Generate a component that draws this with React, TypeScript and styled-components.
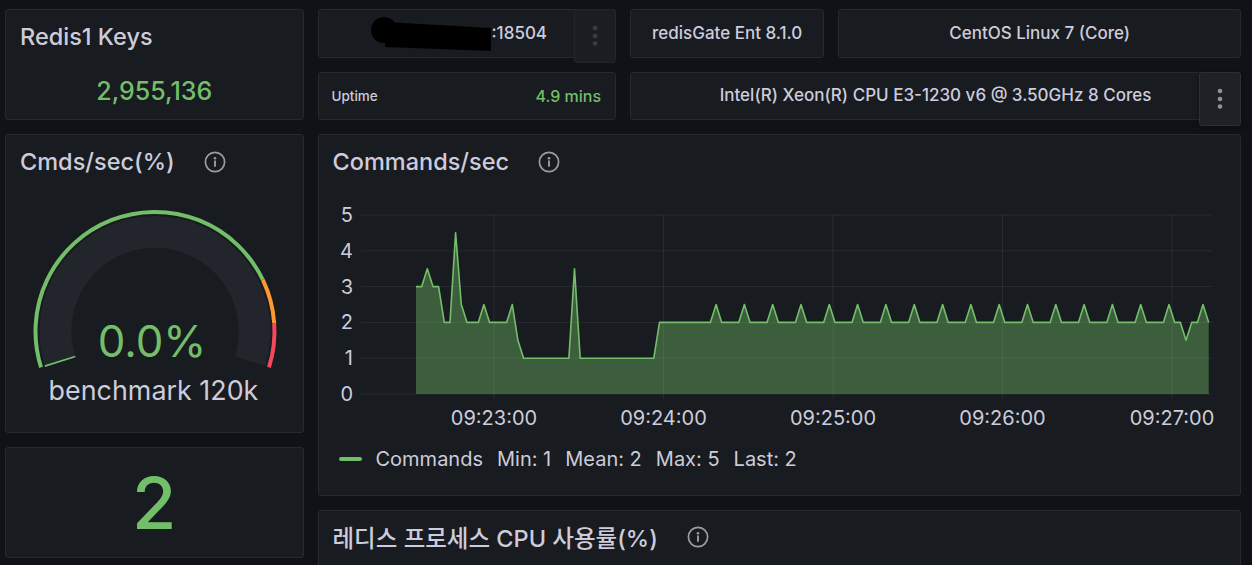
import React from 'react';
import styled, { createGlobalStyle } from 'styled-components';

const GlobalStyle = createGlobalStyle`
  html, body {
    margin: 0;
    padding: 0;
    background: #111217;
    overflow: hidden;
  }
  body {
    font-family: Inter, "Noto Sans CJK KR", "Liberation Sans", sans-serif;
    color: #ccccdc;
  }
`;

const GREEN = '#73bf69';

// ---- chart data (one point every 2s) ----
const buildSeries = () => {
  const v: number[] = [3, 3, 3.5, 3, 3, 2, 2, 4.5, 2.5, 2, 2, 2, 2.5, 2, 2, 2, 2, 2.5, 1.5];
  for (let i = 19; i <= 27; i++) v.push(1);
  v.push(3.5);
  for (let i = 29; i <= 42; i++) v.push(1);
  for (let i = 43; i <= 135; i++) v.push(i >= 53 && (i - 53) % 5 === 0 ? 2.5 : 2);
  v.push(1.5, 2, 2, 2.5, 2);
  return v;
};

const series = buildSeries();
const X0 = 415;
const STEP = 5.662;
const Y0 = 393;
const UNIT = 35.8;
const px = (i: number) => X0 + i * STEP;
const py = (val: number) => Y0 - val * UNIT;

const linePath = series.map((val, i) => `${i ? 'L' : 'M'}${px(i).toFixed(1)} ${py(val).toFixed(1)}`).join(' ');
const areaPath = `M${X0} ${Y0} ${linePath.replace(/^M/, 'L')} L${px(series.length - 1).toFixed(1)} ${Y0} Z`;

const timeTicks = ['09:23:00', '09:24:00', '09:25:00', '09:26:00', '09:27:00'];

// ---- gauge geometry ----
const CX = 155;
const CY = 331;
const START = 197.5;
const SWEEP = 215;
const pt = (r: number, a: number) => [CX + r * Math.cos((a * Math.PI) / 180), CY - r * Math.sin((a * Math.PI) / 180)];
const arc = (r: number, a0: number, a1: number) => {
  const [x0, y0] = pt(r, a0);
  const [x1, y1] = pt(r, a1);
  return `M ${x0} ${y0} A ${r} ${r} 0 ${a0 - a1 > 180 ? 1 : 0} 1 ${x1} ${y1}`;
};
const at = (pct: number) => START - SWEEP * pct;

const InfoIcon = () => (
  <InfoSvg viewBox="0 0 24 24" width="24" height="24">
    <circle cx="12" cy="12" r="9.6" fill="none" stroke="currentColor" strokeWidth="1.7" />
    <circle cx="12" cy="8.3" r="1.25" fill="currentColor" />
    <line x1="12" y1="11.3" x2="12" y2="16" stroke="currentColor" strokeWidth="1.9" strokeLinecap="round" />
  </InfoSvg>
);

const PanelMenu = ({ active }: { active?: boolean }) => (
  <MenuButton $active={active}>
    <svg width="6" height="22" viewBox="0 0 6 22">
      <circle cx="3" cy="3" r="2.3" fill="currentColor" />
      <circle cx="3" cy="11" r="2.3" fill="currentColor" />
      <circle cx="3" cy="18.5" r="2.3" fill="currentColor" />
    </svg>
  </MenuButton>
);

const Gauge = () => {
  const [lx0, ly0] = pt(84, START);
  const [lx1, ly1] = pt(116, START);
  return (
    <svg width="297" height="245" viewBox="6 187 297 245">
      <path d={arc(100, START, START - SWEEP)} fill="none" stroke="#22252b" strokeWidth="32" />
      <path d={arc(120, START, at(0.8))} fill="none" stroke={GREEN} strokeWidth="4" />
      <path d={arc(120, at(0.8), at(0.9))} fill="none" stroke="#ff9830" strokeWidth="4" />
      <path d={arc(120, at(0.9), START - SWEEP)} fill="none" stroke="#f2495c" strokeWidth="4" />
      <line x1={lx0} y1={ly0} x2={lx1} y2={ly1} stroke={GREEN} strokeWidth="1.6" />
      <text x="152" y="357" textAnchor="middle" fill={GREEN} fontSize="44" fontFamily="Inter">
        0.0%
      </text>
      <text x="153.5" y="400" textAnchor="middle" fill="#ccccdc" fontSize="27" fontFamily="Inter">
        benchmark 120k
      </text>
    </svg>
  );
};

const Chart = () => (
  <svg width="921" height="245" viewBox="318 187 921 245">
    {[0, 1, 2, 3, 4, 5].map((v) => (
      <g key={v}>
        <line x1="360" x2="1211" y1={py(v)} y2={py(v)} stroke="rgba(204,204,220,0.09)" strokeWidth="1" />
        <text x="352" y={py(v) + 7} textAnchor="end" fill="#ccccdc" fontSize="20" fontFamily="Inter">
          {v}
        </text>
      </g>
    ))}
    {timeTicks.map((t, k) => {
      const x = 493 + k * 169.5;
      return (
        <g key={t}>
          <line x1={x} x2={x} y1="214" y2="398" stroke="rgba(204,204,220,0.09)" strokeWidth="1" />
          <text x={x} y="424" textAnchor="middle" fill="#ccccdc" fontSize="20" fontFamily="Inter">
            {t}
          </text>
        </g>
      );
    })}
    <path d={areaPath} fill={GREEN} fillOpacity="0.41" />
    <path d={linePath} fill="none" stroke={GREEN} strokeWidth="1.6" strokeLinejoin="round" />
  </svg>
);

const Redaction = () => (
  <svg width="121" height="37" viewBox="0 0 121 37">
    <circle cx="14" cy="15" r="13" fill="#000" />
    <polygon points="15,7 121,13 121,36 15,32" fill="#000" />
  </svg>
);

export default function App() {
  return (
    <>
      <GlobalStyle />
      <Dashboard>
        <Panel $col="1 / span 6" $row="1 / span 2">
          <PanelHeader>
            <PanelTitle>Redis1 Keys</PanelTitle>
          </PanelHeader>
          <StatBody>
            <StatValue $size={25} $color={GREEN}>2,955,136</StatValue>
          </StatBody>
        </Panel>

        <Panel $col="7 / span 6" $row="1">
          <StatBody $padRight={16}>
            <Redaction />
            <StatValue $size={17}>:18504</StatValue>
          </StatBody>
          <PanelMenu />
        </Panel>

        <Panel $col="13 / span 4" $row="1">
          <StatBody>
            <StatValue $size={17}>redisGate Ent 8.1.0</StatValue>
          </StatBody>
        </Panel>

        <Panel $col="17 / span 8" $row="1">
          <StatBody>
            <StatValue $size={17}>CentOS Linux 7 (Core)</StatValue>
          </StatBody>
        </Panel>

        <Panel $col="7 / span 6" $row="2">
          <SplitBody>
            <StatLabel>Uptime</StatLabel>
            <StatValue $size={16} $color={GREEN}>4.9 mins</StatValue>
          </SplitBody>
        </Panel>

        <Panel $col="13 / span 12" $row="2">
          <StatBody>
            <StatValue $size={17}>Intel(R) Xeon(R) CPU E3-1230 v6 @ 3.50GHz 8 Cores</StatValue>
          </StatBody>
          <PanelMenu active />
        </Panel>

        <Panel $col="1 / span 6" $row="3 / span 5">
          <PanelHeader>
            <PanelTitle>Cmds/sec(%)</PanelTitle>
            <InfoIcon />
          </PanelHeader>
          <Gauge />
        </Panel>

        <Panel $col="7 / span 18" $row="3 / span 6">
          <PanelHeader>
            <PanelTitle>Commands/sec</PanelTitle>
            <InfoIcon />
          </PanelHeader>
          <Chart />
          <Legend>
            <LegendSwatch />
            <LegendItem>Commands</LegendItem>
            <LegendItem>Min: 1</LegendItem>
            <LegendItem>Mean: 2</LegendItem>
            <LegendItem>Max: 5</LegendItem>
            <LegendItem>Last: 2</LegendItem>
          </Legend>
        </Panel>

        <Panel $col="1 / span 6" $row="8 / span 2">
          <StatBody>
            <StatValue $size={72} $color={GREEN}>2</StatValue>
          </StatBody>
        </Panel>

        <Panel $col="7 / span 18" $row="9 / span 6">
          <PanelHeader>
            <PanelTitle>레디스 프로세스 CPU 사용률(%)</PanelTitle>
            <InfoIcon />
          </PanelHeader>
        </Panel>
      </Dashboard>
    </>
  );
}

const Dashboard = styled.main`
  display: grid;
  grid-template-columns: repeat(24, minmax(0, 1fr));
  grid-auto-rows: 48.6px;
  gap: 14px;
  padding: 9px 11px 0 5px;
  height: 565px;
  box-sizing: border-box;
  overflow: hidden;
`;

const Panel = styled.section<{ $col: string; $row: string }>`
  grid-column: ${(p) => p.$col};
  grid-row: ${(p) => p.$row};
  position: relative;
  display: flex;
  flex-direction: column;
  min-width: 0;
  background: #181b1f;
  border: 1px solid #26292e;
  border-radius: 3px;
`;

const PanelHeader = styled.header`
  display: flex;
  align-items: center;
  gap: 28px;
  height: 53px;
  padding: 0 14px;
  flex-shrink: 0;
`;

const PanelTitle = styled.h2`
  margin: 0;
  font-size: 23.5px;
  font-weight: 500;
  color: #ccccdc;
  white-space: nowrap;
`;

const InfoSvg = styled.svg`
  color: #9b9ca6;
  flex-shrink: 0;
`;

const StatBody = styled.div<{ $padRight?: number }>`
  flex: 1;
  display: flex;
  align-items: center;
  justify-content: center;
  padding-right: ${(p) => p.$padRight ?? 0}px;
`;

const SplitBody = styled.div`
  flex: 1;
  display: flex;
  align-items: center;
  justify-content: space-between;
  padding: 0 14px 0 13px;
`;

const StatValue = styled.span<{ $size: number; $color?: string }>`
  font-size: ${(p) => p.$size}px;
  font-weight: 500;
  line-height: 1;
  color: ${(p) => p.$color ?? '#ccccdc'};
  white-space: nowrap;
`;

const StatLabel = styled.span`
  font-size: 13.5px;
  font-weight: 500;
  color: #ccccdc;
`;

const MenuButton = styled.div<{ $active?: boolean }>`
  position: absolute;
  top: -1px;
  right: -1px;
  width: 42px;
  height: 54px;
  box-sizing: border-box;
  display: flex;
  align-items: center;
  justify-content: center;
  border-radius: 3px;
  background: ${(p) => (p.$active ? '#1f2126' : '#1a1d21')};
  border: 1px solid ${(p) => (p.$active ? '#2c2f35' : '#22252a')};
  box-shadow: ${(p) => (p.$active ? '0 2px 6px rgba(0,0,0,0.35)' : 'none')};
  color: ${(p) => (p.$active ? '#8f929a' : '#3a3d43')};
`;

const Legend = styled.div`
  display: flex;
  align-items: center;
  gap: 14px;
  height: 28px;
  margin-top: 12px;
  padding-left: 20px;
`;

const LegendSwatch = styled.span`
  width: 23px;
  height: 4.5px;
  border-radius: 3px;
  background: ${GREEN};
`;

const LegendItem = styled.span`
  font-size: 20px;
  color: #ccccdc;
  white-space: nowrap;
`;
